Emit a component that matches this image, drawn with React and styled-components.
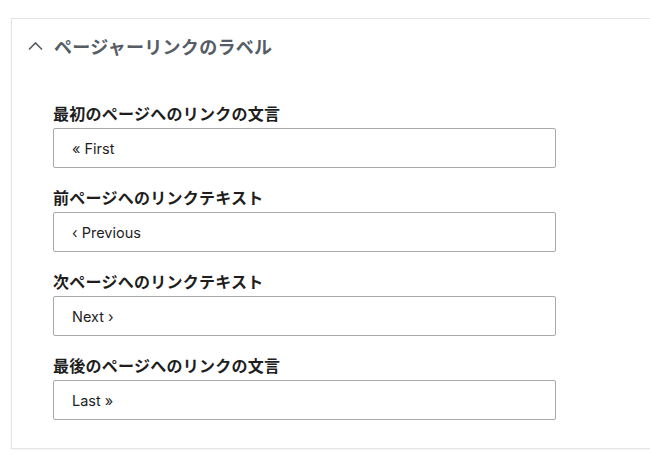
import React from "react";
import styled, { createGlobalStyle } from "styled-components";

const Global = createGlobalStyle`
  html, body { margin: 0; padding: 0; background: #ffffff; }
  body { overflow: hidden; font-family: "Noto Sans CJK JP", "Noto Sans", sans-serif; }
`;

const Page = styled.div`
  width: 650px;
  height: 463px;
  overflow: hidden;
  padding: 18px 0 0 11px;
  box-sizing: border-box;
`;

const Card = styled.section`
  width: 680px;
  box-sizing: border-box;
  border: 1px solid #e4e4e4;
  background: #fff;
  box-shadow: 0 1px 2px rgba(0, 0, 0, 0.05);
`;

const Header = styled.div`
  display: flex;
  align-items: center;
  height: 54px;
  padding-left: 16px;
  gap: 11px;
`;

const Chevron = styled.svg`
  width: 15px;
  height: 15px;
  flex: none;
`;

const Title = styled.h3`
  margin: 0;
  font-family: "Noto Sans CJK JP", sans-serif;
  font-size: 18px;
  font-weight: 700;
  letter-spacing: 0.3px;
  color: #555d66;
  line-height: 24px;
`;

const Body = styled.div`
  display: flex;
  flex-direction: column;
  gap: 19px;
  padding: 30px 0 28px 41px;
`;

const Field = styled.div`
  display: flex;
  flex-direction: column;
  gap: 5px;
`;

const Label = styled.label`
  font-family: "Noto Sans CJK JP", sans-serif;
  font-size: 16px;
  font-weight: 700;
  letter-spacing: 0.25px;
  line-height: 20px;
  color: #1e1e1e;
`;

const Input = styled.input`
  width: 503px;
  height: 40px;
  box-sizing: border-box;
  border: 1px solid #a7aaad;
  border-radius: 2px;
  padding: 0 18px;
  font-family: Inter, "Noto Sans", sans-serif;
  font-size: 14.5px;
  color: #1e1e1e;
  background: #fff;
  outline: none;
`;

const fields = [
  { label: "最初のページへのリンクの文言", value: "« First" },
  { label: "前ページへのリンクテキスト", value: "‹ Previous" },
  { label: "次ページへのリンクテキスト", value: "Next ›" },
  { label: "最後のページへのリンクの文言", value: "Last »" },
];

export default function App() {
  return (
    <Page>
      <Global />
      <Card>
        <Header>
          <Chevron viewBox="0 0 15 15">
            <polyline
              points="1,10.5 7.5,4 14,10.5"
              fill="none"
              stroke="#555d66"
              strokeWidth="1.6"
            />
          </Chevron>
          <Title>ページャーリンクのラベル</Title>
        </Header>
        <Body>
          {fields.map((f) => (
            <Field key={f.label}>
              <Label>{f.label}</Label>
              <Input defaultValue={f.value} />
            </Field>
          ))}
        </Body>
      </Card>
    </Page>
  );
}
